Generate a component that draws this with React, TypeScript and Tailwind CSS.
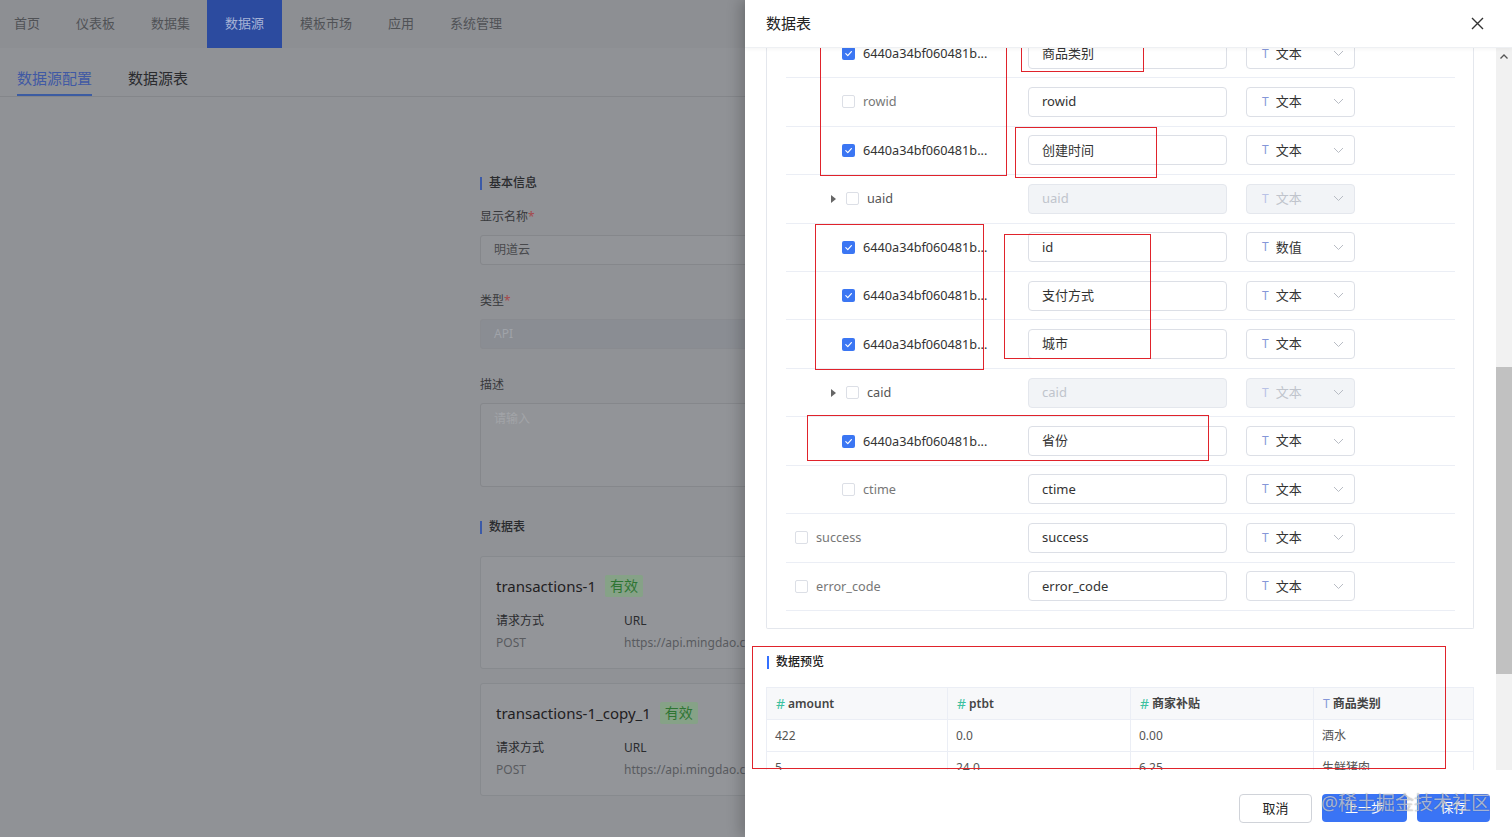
import React from 'react';

type Row = {
  level: 0 | 1 | 2;
  checked?: boolean;
  name: string;
  alias: string;
  type?: string;
  muted?: boolean;
  disabled?: boolean;
};

const hash = '6440a34bf060481b...';

const rows: Row[] = [
  { level: 2, checked: true, name: hash, alias: '商品类别' },
  { level: 2, name: 'rowid', alias: 'rowid', muted: true },
  { level: 2, checked: true, name: hash, alias: '创建时间' },
  { level: 1, name: 'uaid', alias: 'uaid', disabled: true },
  { level: 2, checked: true, name: hash, alias: 'id', type: '数值' },
  { level: 2, checked: true, name: hash, alias: '支付方式' },
  { level: 2, checked: true, name: hash, alias: '城市' },
  { level: 1, name: 'caid', alias: 'caid', disabled: true },
  { level: 2, checked: true, name: hash, alias: '省份' },
  { level: 2, name: 'ctime', alias: 'ctime', muted: true },
  { level: 0, name: 'success', alias: 'success', muted: true },
  { level: 0, name: 'error_code', alias: 'error_code', muted: true },
];

const navItems = [
  { label: '首页', cls: 'px-[14px] mr-[8px]' },
  { label: '仪表板', cls: 'px-[14px] mr-[8px]' },
  { label: '数据集', cls: 'px-[14px] mr-[3px]' },
  { label: '数据源', cls: 'w-[75px] justify-center bg-[#2c4b9f] text-[#a7b3d6] mr-[4px]', active: true },
  { label: '模板市场', cls: 'px-[14px] mr-[8px]' },
  { label: '应用', cls: 'px-[14px] mr-[8px]' },
  { label: '系统管理', cls: 'px-[14px]' },
];

const font = 'font-["Noto_Sans","Noto_Sans_CJK_SC",sans-serif]';

function Checkbox({ checked }: { checked?: boolean }) {
  return checked ? (
    <span className="flex h-[13px] w-[13px] shrink-0 items-center justify-center rounded-[2px] bg-[#3b76f3]">
      <svg width="9" height="9" viewBox="0 0 10 10" fill="none">
        <path d="M2 5.2 4.2 7.3 8.2 2.8" stroke="white" strokeWidth="1.3" strokeLinecap="round" strokeLinejoin="round" />
      </svg>
    </span>
  ) : (
    <span className="h-[13px] w-[13px] shrink-0 rounded-[2px] border border-[#dcdfe6] bg-white" />
  );
}

function Chevron() {
  return (
    <svg width="11" height="7" viewBox="0 0 11 7" fill="none">
      <path d="M1 1l4.5 4.5L10 1" stroke="#b8bcc4" strokeWidth="1" />
    </svg>
  );
}

function FieldRow({ row }: { row: Row }) {
  const pad = row.level === 0 ? 'pl-[9px]' : row.level === 1 ? 'pl-[45px]' : 'pl-[56px]';
  const nameColor = row.muted ? 'text-[#777]' : row.level === 1 ? 'text-[#555]' : 'text-[#333]';
  return (
    <div className="flex h-[47.45px] items-center border-b border-[#ebeef5] box-content">
      <div className={`flex w-[242px] items-center ${pad}`}>
        {row.level === 1 && (
          <svg width="5" height="8" viewBox="0 0 5 8" className="mr-[10px]">
            <path d="M0 0l5 4-5 4z" fill="#666" />
          </svg>
        )}
        <Checkbox checked={row.checked} />
        <span className={`ml-[8px] text-[12.7px] ${nameColor}`}>{row.name}</span>
      </div>
      <div
        className={`flex h-[30px] w-[199px] items-center rounded-[4px] border px-[13px] text-[13px] ${
          row.disabled ? 'border-[#e4e7ed] bg-[#f2f4f7] text-[#c0c4cc]' : 'border-[#dcdfe6] bg-white text-[#333]'
        }`}
      >
        {row.alias}
      </div>
      <div
        className={`ml-[19px] flex h-[30px] w-[109px] items-center rounded-[4px] border pl-[15px] pr-[10px] text-[13px] ${
          row.disabled ? 'border-[#e4e7ed] bg-[#f2f4f7] text-[#c0c4cc]' : 'border-[#dcdfe6] bg-white text-[#333]'
        }`}
      >
        <span className={`mr-[7px] text-[12px] ${row.disabled ? 'text-[#b9c2e6]' : 'text-[#8596d8]'}`}>T</span>
        <span className="flex-1">{row.type ?? '文本'}</span>
        <Chevron />
      </div>
    </div>
  );
}

function SectionTitle({ children, dim }: { children: React.ReactNode; dim?: boolean }) {
  return (
    <div className="flex h-[16px] items-center">
      <span className={`h-[13px] w-[2px] ${dim ? 'bg-[#3b5aa8]' : 'bg-[#3370ff]'}`} />
      <span className={`ml-[7px] text-[12px] font-medium ${dim ? 'text-[#2a2b2e]' : 'text-[#222]'}`}>{children}</span>
    </div>
  );
}

function SourceCard({ title }: { title: string }) {
  return (
    <div className="rounded-[3px] border border-[#878a8e] bg-[#939599] px-[15px] pt-[18px] pb-[17px]">
      <div className="flex h-[22px] items-center">
        <span className="text-[15px] text-[#1f2022]">{title}</span>
        <span className="ml-[9px] rounded-[2px] bg-[#86a287] px-[5px] text-[14px] leading-[22px] text-[#2e7533]">有效</span>
      </div>
      <div className="mt-[16px] flex text-[12px] leading-[16px] text-[#2a2b2e]">
        <span className="w-[128px]">请求方式</span>
        <span>URL</span>
      </div>
      <div className="mt-[6px] flex text-[12px] leading-[16px] text-[#595b5f]">
        <span className="w-[128px]">POST</span>
        <span className="whitespace-nowrap">https://api.mingdao.com/v2/open/worksheet/getFilterRows</span>
      </div>
    </div>
  );
}

function BackgroundPage() {
  return (
    <div className="h-full w-full bg-[#909296]">
      <div className="flex h-[48px] items-stretch bg-[#8d8f93]">
        {navItems.map((n) => (
          <div key={n.label} className={`flex items-center text-[13px] ${n.active ? '' : 'text-[#505256]'} ${n.cls}`}>
            {n.label}
          </div>
        ))}
      </div>
      <div className="flex border-b border-[#84868a] px-[17px] pt-[19px]">
        <div className="border-b-2 border-[#3c5ca2] pb-[5px] text-[15px] leading-[22px] text-[#4059a4]">数据源配置</div>
        <div className="ml-[36px] pb-[7px] text-[15px] leading-[22px] text-[#2a2b2e]">数据源表</div>
      </div>
      <div className="mx-auto w-[552px] pt-[78px]">
        <SectionTitle dim>基本信息</SectionTitle>
        <div className="mt-[18px] text-[12px] leading-[16px] text-[#38393c]">
          显示名称<span className="text-[#a5484b]">*</span>
        </div>
        <div className="mt-[10px] flex h-[30px] items-center rounded-[3px] border border-[#85878b] bg-[#929498] px-[13px] text-[12px] text-[#48494c]">
          明道云
        </div>
        <div className="mt-[28px] text-[12px] leading-[16px] text-[#38393c]">
          类型<span className="text-[#a5484b]">*</span>
        </div>
        <div className="mt-[10px] flex h-[30px] items-center rounded-[3px] border border-[#898b90] bg-[#8a8d93] px-[13px] text-[12px] text-[#a0a3a9]">
          API
        </div>
        <div className="mt-[28px] text-[12px] leading-[16px] text-[#38393c]">描述</div>
        <div className="mt-[10px] h-[84px] rounded-[3px] border border-[#85878b] bg-[#929498] px-[13px] pt-[6px] text-[12px] text-[#a2a4a8]">
          请输入
        </div>
        <div className="mt-[32px]">
          <SectionTitle dim>数据表</SectionTitle>
        </div>
        <div className="mt-[21px]">
          <SourceCard title="transactions-1" />
        </div>
        <div className="mt-[14px]">
          <SourceCard title="transactions-1_copy_1" />
        </div>
      </div>
    </div>
  );
}

function Drawer() {
  const cols = [
    { w: 'w-[181px]', icon: '#', label: 'amount', v1: '422', v2: '5' },
    { w: 'w-[183px]', icon: '#', label: 'ptbt', v1: '0.0', v2: '24.0' },
    { w: 'w-[183px]', icon: '#', label: '商家补贴', v1: '0.00', v2: '6.25' },
    { w: 'flex-1', icon: 'T', label: '商品类别', v1: '酒水', v2: '生鲜猪肉' },
  ];
  return (
    <div className="flex h-full w-[767px] flex-col bg-white shadow-[-6px_0_12px_rgba(0,0,0,0.18)]">
      <div className="relative z-10 flex h-[48px] shrink-0 items-center justify-between border-b border-[#eef0f3] bg-white pl-[21px] pr-[28px] shadow-[0_1px_4px_rgba(0,0,0,0.05)]">
        <span className="text-[15px] text-[#222]">数据表</span>
        <svg width="13" height="13" viewBox="0 0 13 13">
          <path d="M1 1l11 11M12 1 1 12" stroke="#333" strokeWidth="1.4" />
        </svg>
      </div>
      <div className="flex min-h-0 flex-1">
        <div className="min-w-0 flex-1 overflow-hidden pl-[21px] pr-[22px]">
          <div className="-mt-[18.2px] rounded-b-[2px] border border-t-0 border-[#e4e7ed] pl-[19px] pr-[18px] pb-[17px]">
            {rows.map((r, i) => (
              <FieldRow key={i} row={r} />
            ))}
          </div>
          <div className="mt-[25px]">
            <div className="pl-[1px]">
              <SectionTitle>数据预览</SectionTitle>
            </div>
            <div className="mt-[17px] flex border border-[#ebeef5] text-[12px]">
              {cols.map((c, i) => (
                <div key={i} className={`${c.w} ${i < 3 ? 'border-r border-[#ebeef5]' : ''}`}>
                  <div className="flex h-[32px] items-center border-b border-[#ebeef5] bg-[#f7f8fa] pl-[9px] font-semibold text-[#444]">
                    <span className={`mr-[3px] font-normal ${c.icon === '#' ? 'text-[14px] text-[#3cc1a0]' : 'text-[12px] text-[#8596d8]'}`}>
                      {c.icon}
                    </span>
                    {c.label}
                  </div>
                  <div className="flex h-[32px] items-center border-b border-[#ebeef5] pl-[8px] text-[#555]">{c.v1}</div>
                  <div className="flex h-[32px] items-center pl-[8px] text-[#555]">{c.v2}</div>
                </div>
              ))}
            </div>
          </div>
        </div>
        <div className="flex w-[16px] shrink-0 flex-col bg-[#f1f1f1]">
          <div className="flex h-[17px] items-center justify-center">
            <svg width="8" height="5" viewBox="0 0 8 5">
              <path d="M0.5 4.5 4 1l3.5 3.5" stroke="#555" strokeWidth="1.3" fill="none" />
            </svg>
          </div>
          <div className="h-[302px]" />
          <div className="h-[307px] bg-[#c1c1c1]" />
        </div>
      </div>
      <div className="relative flex h-[67px] shrink-0 items-start justify-end gap-[10px] bg-white pr-[22px] pt-[24px]">
        <button className="h-[29px] w-[73px] rounded-[4px] border border-[#d0d3d9] bg-white text-[13px] text-[#222]">取消</button>
        <button className="h-[28px] w-[85px] rounded-[4px] bg-[#3a74f5] text-[13px] text-white">上一步</button>
        <button className="h-[28px] w-[73px] rounded-[4px] bg-[#3a74f5] text-[13px] text-white">保存</button>
        <span className="pointer-events-none absolute right-[22px] top-[21px] text-[19px] leading-[24px] text-white/60 [text-shadow:0_0_1px_rgba(0,0,0,0.45)]">
          @稀土掘金技术社区
        </span>
      </div>
    </div>
  );
}

const marks = [
  'left-[820px] top-[44px] w-[187px] h-[132px]',
  'left-[1021px] top-[36px] w-[123px] h-[36px]',
  'left-[1015px] top-[127px] w-[142px] h-[51px]',
  'left-[815px] top-[224px] w-[169px] h-[146px]',
  'left-[1004px] top-[234px] w-[147px] h-[125px]',
  'left-[807px] top-[415px] w-[402px] h-[46px]',
  'left-[752px] top-[646px] w-[694px] h-[123px]',
];

export default function App() {
  return (
    <div className={`relative h-[837px] w-[1512px] overflow-hidden ${font}`}>
      <BackgroundPage />
      <div className="absolute right-0 top-0 h-full">
        <Drawer />
      </div>
      {marks.map((m) => (
        <div key={m} className={`pointer-events-none absolute border-[1.5px] border-[#e0232b] ${m}`} />
      ))}
    </div>
  );
}
